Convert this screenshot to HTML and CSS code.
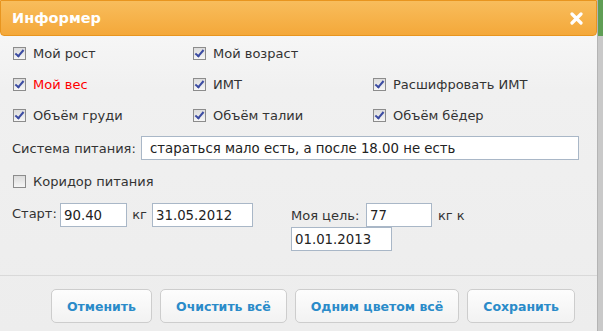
FILE: index.html
```html
<!DOCTYPE html>
<html lang="ru">
<head>
<meta charset="utf-8">
<title>Информер</title>
<link rel="stylesheet" href="styles.css">
</head>
<body>
<div class="page">
  <div class="dialog">
    <div class="titlebar">
      <span class="title">Информер</span>
      <svg class="close" width="13" height="13" viewBox="0 0 13 13"><path d="M2 2 L11 11 M11 2 L2 11" stroke="#fff" stroke-width="3.2" stroke-linecap="round"/></svg>
    </div>
    <div class="content">
      <div class="checks">
        <label class="chk"><span class="cb on"></span>Мой рост</label>
        <label class="chk"><span class="cb on"></span>Мой возраст</label>
        <span></span>
        <label class="chk red"><span class="cb on"></span>Мой вес</label>
        <label class="chk"><span class="cb on"></span>ИМТ</label>
        <label class="chk"><span class="cb on"></span>Расшифровать ИМТ</label>
        <label class="chk"><span class="cb on"></span>Объём груди</label>
        <label class="chk"><span class="cb on"></span>Объём талии</label>
        <label class="chk"><span class="cb on"></span>Объём бёдер</label>
      </div>
      <div class="diet">
        <span class="lbl lbl-diet">Система питания:</span>
        <span class="field field-wide">стараться мало есть, а после 18.00 не есть</span>
      </div>
      <label class="chk corridor"><span class="cb"></span>Коридор питания</label>
      <div class="start">
        <span class="lbl lbl-start">Старт:</span>
        <span class="field field-num">90.40</span>
        <span class="unit">кг</span>
        <span class="field field-date">31.05.2012</span>
        <div class="goal">
          <div class="goal-line">
            <span class="lbl lbl-goal">Моя цель:</span>
            <span class="field field-goal">77</span>
            <span class="unit">кг к</span>
          </div>
          <span class="field field-date">01.01.2013</span>
        </div>
      </div>
    </div>
    <div class="footer">
      <button class="btn">Отменить</button>
      <button class="btn">Очистить всё</button>
      <button class="btn">Одним цветом всё</button>
      <button class="btn">Сохранить</button>
    </div>
  </div>
  <div class="side"><div class="side-top"></div></div>
</div>
</body>
</html>
```

FILE: styles.css
```css
* { box-sizing: border-box; }
html, body { margin: 0; padding: 0; }
body {
  width: 603px;
  height: 331px;
  overflow: hidden;
  font-family: "DejaVu Sans", Tahoma, sans-serif;
  font-size: 13px;
  color: #333;
  background: #cfcfcf;
}
.page { display: flex; height: 331px; }
.dialog {
  width: 598px;
  height: 331px;
  display: flex;
  flex-direction: column;
  background: linear-gradient(#fafafa 0, #f0f0f0 90px, #ededed 100%);
  border-right: 1px solid #b4b4b4;
}
.side { flex: 1; background: #c9c9c9; }
.side-top { height: 36px; background: #5f9e55; }

.titlebar {
  height: 36px;
  display: flex;
  align-items: center;
  justify-content: space-between;
  padding: 0 13px 0 11px;
  background: linear-gradient(#f8bd5c, #f4a83a);
  border: 1px solid #e8951f;
  border-radius: 0 0 4px 4px;
}
.title { color: #fff; font-weight: bold; font-size: 14.5px; }
.close { display: block; }

.content { flex: 1; padding: 2px 0 0 12px; }
.checks {
  display: grid;
  grid-template-columns: 180px 180px 180px;
  grid-auto-rows: 31px;
}
.chk { display: flex; align-items: center; gap: 7px; padding-left: 1px; }
.red { color: #f00; }
.cb {
  width: 13px;
  height: 13px;
  border: 1px solid #8c8c8c;
  background: linear-gradient(#dcdcdc, #f6f6f6);
  position: relative;
  flex: none;
}
.cb.on::after {
  content: "";
  position: absolute;
  left: 3px;
  top: 0px;
  width: 3px;
  height: 7px;
  border: solid #3b4ba2;
  border-width: 0 2px 2px 0;
  transform: rotate(40deg);
}

.diet { display: flex; align-items: center; margin-top: 5px; height: 24px; }
.lbl-diet { width: 129px; flex: none; }
.field {
  display: flex;
  align-items: center;
  height: 24px;
  padding: 0 3px;
  border: 1px solid #a9b7c7;
  background: #fff;
  color: #222;
  font-size: 13.3px;
  flex: none;
}
.field-wide { width: 438px; padding-left: 8px; }
.corridor { height: 31px; margin-top: 6px; }
.start { display: flex; align-items: flex-start; margin-top: 6px; }
.lbl-start { line-height: 22px; width: 48px; flex: none; }
.start > .unit { line-height: 24px; width: 25px; text-align: center; flex: none; }
.field-num { width: 67px; }
.field-date { width: 101px; }
.goal { margin-left: 38px; display: flex; flex-direction: column; }
.goal-line { display: flex; align-items: center; }
.lbl-goal { width: 75px; flex: none; }
.field-goal { width: 66px; }
.goal-line .unit { margin-left: 6px; }

.footer {
  height: 56px;
  border-top: 1px solid #d9d9d9;
  display: flex;
  justify-content: flex-end;
  align-items: flex-start;
  gap: 8px;
  padding: 13px 22px 0 0;
}
.btn {
  height: 34px;
  padding: 0 15px;
  font-family: "DejaVu Sans", Tahoma, sans-serif;
  font-size: 12.5px;
  font-weight: bold;
  color: #2a8bc9;
  background: linear-gradient(#fdfdfd, #f2f2f2);
  border: 1px solid #cdcdcd;
  border-radius: 5px;
}
```
